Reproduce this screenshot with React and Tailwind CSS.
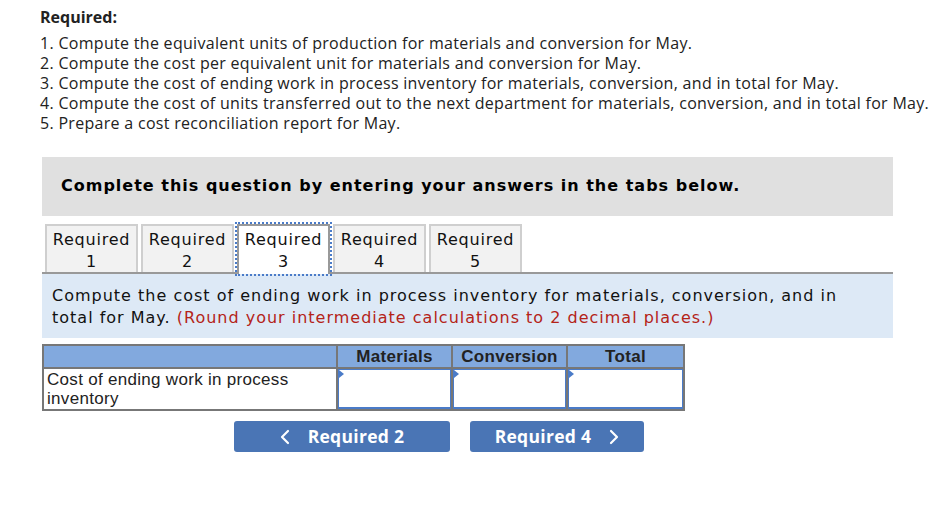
import React from "react";

const sans = { fontFamily: "'Open Sans', Lato, sans-serif" };
const verdana = { fontFamily: "'DejaVu Sans', Verdana, sans-serif" };

function Tab({ n, active }) {
  return (
    <div
      className={
        "w-[93px] flex flex-col items-center justify-center pt-[4px] leading-[22px] text-[16px] tracking-[0.8px] text-[#111] border-2 border-b-0 " +
        (active
          ? "bg-white border-[#999] outline-2 outline-dotted outline-[#4a7bc8] relative z-10 mb-[-2px] h-[50px] pb-[2px]"
          : "bg-[#f2f2f2] border-[#cfcfcf] h-[48px]")
      }
      style={verdana}
    >
      <span>Required</span>
      <span>{n}</span>
    </div>
  );
}

function InputCell() {
  return (
    <td className="border-2 border-[#777] p-0 h-[42px]">
      <div className="relative h-[40px] w-full border border-[#4a7bc8] border-b-2 bg-white">
        <div className="absolute left-0 top-0 w-0 h-0 border-t-[4px] border-b-[4px] border-l-[5px] border-t-transparent border-b-transparent border-l-[#4a7bc8]" />
      </div>
    </td>
  );
}

export default function App() {
  return (
    <div className="w-[942px] h-[506px] bg-white pl-[40px] pt-[7px]">
      <div className="text-[16px] tracking-[0.3px] leading-[20px] text-[#222]" style={sans}>
        <div className="font-bold tracking-normal mb-[6px]">Required:</div>
        <div>1. Compute the equivalent units of production for materials and conversion for May.</div>
        <div>2. Compute the cost per equivalent unit for materials and conversion for May.</div>
        <div>3. Compute the cost of ending work in process inventory for materials, conversion, and in total for May.</div>
        <div>4. Compute the cost of units transferred out to the next department for materials, conversion, and in total for May.</div>
        <div>5. Prepare a cost reconciliation report for May.</div>
      </div>

      <div className="ml-[2px] w-[851px] mt-[24px]">
        <div
          className="h-[59px] bg-[#e0e0e0] flex items-center pl-[19px] pb-[2px] text-[16px] tracking-[1px] font-bold text-black"
          style={verdana}
        >
          Complete this question by entering your answers in the tabs below.
        </div>

        <div className="mt-[8px] flex items-end gap-[3px] pl-[3px] border-b-2 border-[#999]">
          <Tab n="1" />
          <Tab n="2" />
          <Tab n="3" active />
          <Tab n="4" />
          <Tab n="5" />
        </div>

        <div
          className="bg-[#dde9f6] px-[10px] pt-[11px] pb-[9px] text-[16px] tracking-[1px] leading-[22px] text-[#111]"
          style={verdana}
        >
          Compute the cost of ending work in process inventory for materials, conversion, and in total for May.{" "}
          <span className="text-[#b42318]">(Round your intermediate calculations to 2 decimal places.)</span>
        </div>

        <table
          className="mt-[6px] border-collapse border-2 border-[#777] text-[17px] tracking-[0.3px] text-[#222]"
          style={{ fontFamily: "'Liberation Sans', Arial, sans-serif" }}
        >
          <thead>
            <tr className="bg-[#82a9de] h-[23px]">
              <th className="border-2 border-[#777] w-[294px] p-0"></th>
              <th className="border-2 border-[#777] w-[115px] p-0 font-bold leading-[19px]">Materials</th>
              <th className="border-2 border-[#777] w-[115px] p-0 font-bold leading-[19px]">Conversion</th>
              <th className="border-2 border-[#777] w-[117px] p-0 font-bold leading-[19px]">Total</th>
            </tr>
          </thead>
          <tbody>
            <tr className="h-[42px]">
              <td className="border-2 border-[#777] px-[3px] py-0 leading-[19px] align-middle text-left">
                Cost of ending work in process
                <br />
                inventory
              </td>
              <InputCell />
              <InputCell />
              <InputCell />
            </tr>
          </tbody>
        </table>

        <div
          className="mt-[10px] ml-[192px] flex gap-[20px] text-white font-bold text-[17.5px] tracking-[0.3px]"
          style={sans}
        >
          <button className="w-[216px] h-[31px] rounded-[3px] bg-[#4a75b5] flex items-center justify-center gap-[18px]">
            <svg width="10" height="16" viewBox="0 0 10 16" fill="none" stroke="white" strokeWidth="2.2" strokeLinecap="round" strokeLinejoin="round">
              <path d="M8 2 L2 8 L8 14" />
            </svg>
            <span>Required 2</span>
          </button>
          <button className="w-[174px] h-[31px] rounded-[3px] bg-[#4a75b5] flex items-center justify-center gap-[18px]">
            <span>Required 4</span>
            <svg width="10" height="16" viewBox="0 0 10 16" fill="none" stroke="white" strokeWidth="2.2" strokeLinecap="round" strokeLinejoin="round">
              <path d="M2 2 L8 8 L2 14" />
            </svg>
          </button>
        </div>
      </div>
    </div>
  );
}
